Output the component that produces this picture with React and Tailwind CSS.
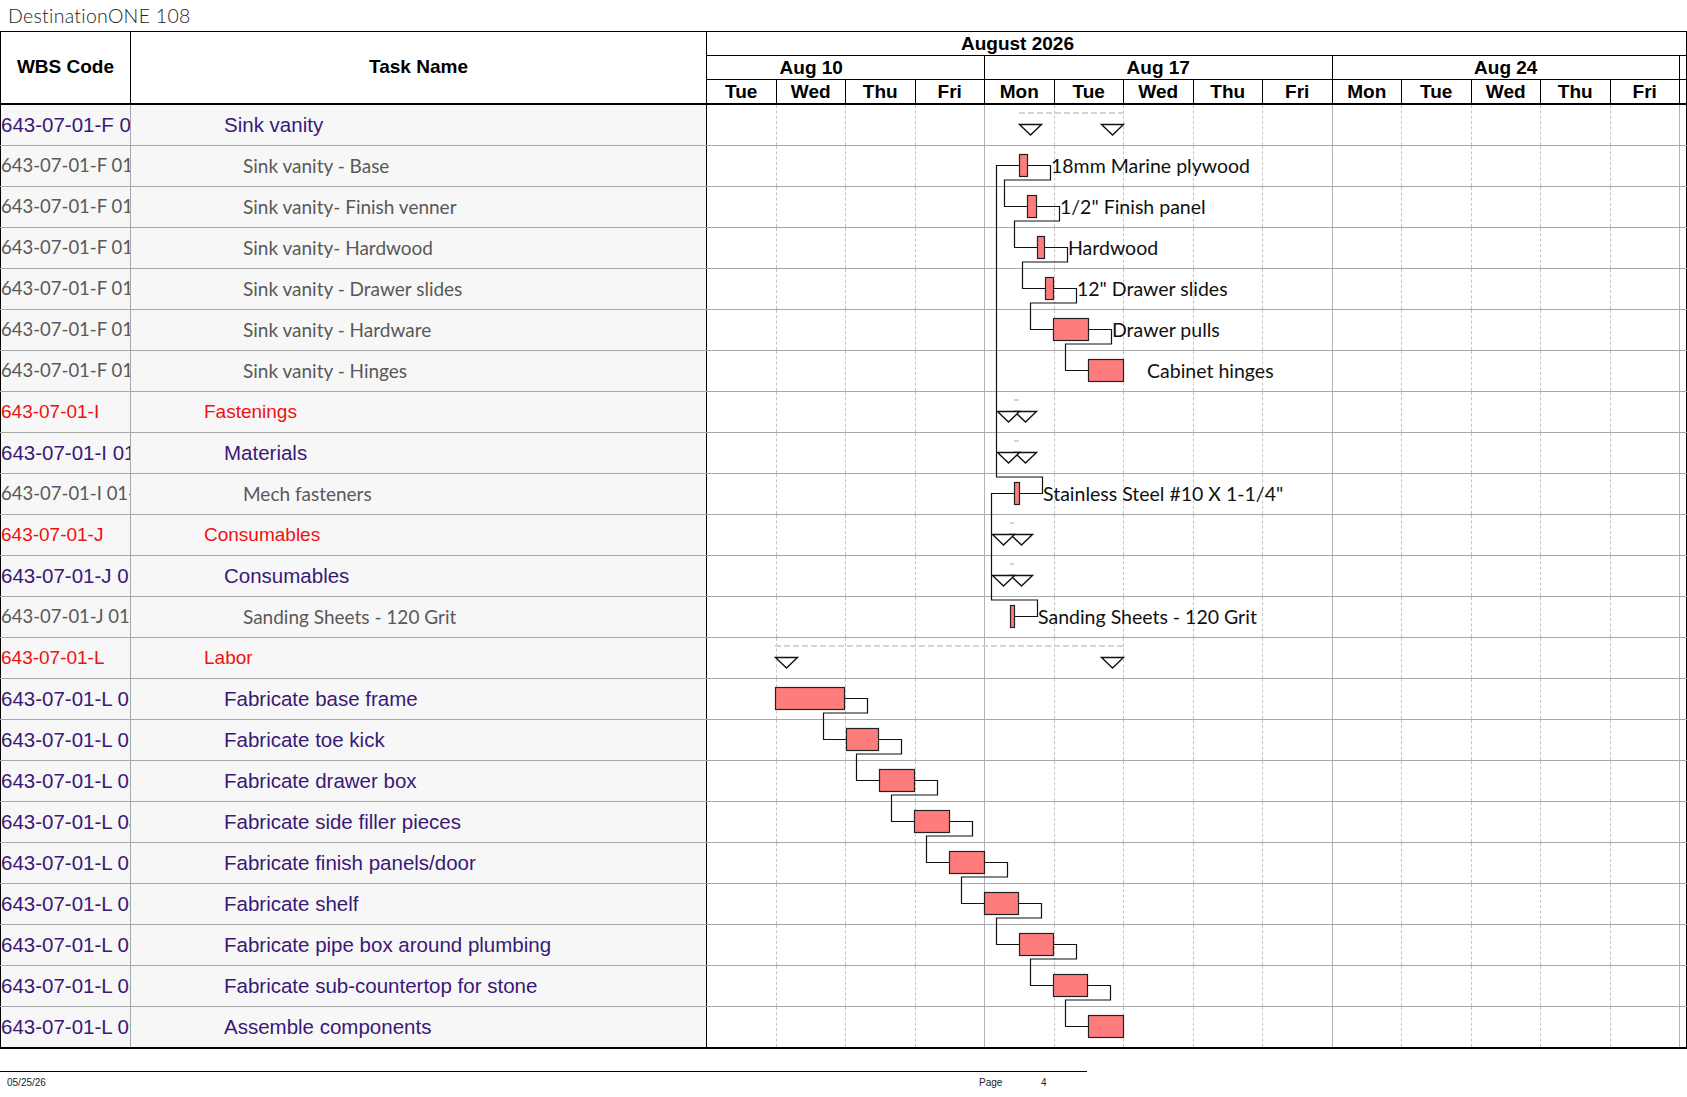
const rows = [
  { wbs: '643-07-01-F 01', name: 'Sink vanity', kind: 'p' },
  { wbs: '643-07-01-F 01-01', name: 'Sink vanity - Base', kind: 'g' },
  { wbs: '643-07-01-F 01-02', name: 'Sink vanity- Finish venner', kind: 'g' },
  { wbs: '643-07-01-F 01-03', name: 'Sink vanity- Hardwood', kind: 'g' },
  { wbs: '643-07-01-F 01-04', name: 'Sink vanity - Drawer slides', kind: 'g' },
  { wbs: '643-07-01-F 01-05', name: 'Sink vanity - Hardware', kind: 'g' },
  { wbs: '643-07-01-F 01-06', name: 'Sink vanity - Hinges', kind: 'g' },
  { wbs: '643-07-01-I', name: 'Fastenings', kind: 'r' },
  { wbs: '643-07-01-I 01', name: 'Materials', kind: 'p' },
  { wbs: '643-07-01-I 01-01', name: 'Mech fasteners', kind: 'g' },
  { wbs: '643-07-01-J', name: 'Consumables', kind: 'r' },
  { wbs: '643-07-01-J 01', name: 'Consumables', kind: 'p' },
  { wbs: '643-07-01-J 01-01', name: 'Sanding Sheets - 120 Grit', kind: 'g' },
  { wbs: '643-07-01-L', name: 'Labor', kind: 'r' },
  { wbs: '643-07-01-L 01', name: 'Fabricate base frame', kind: 'p' },
  { wbs: '643-07-01-L 02', name: 'Fabricate toe kick', kind: 'p' },
  { wbs: '643-07-01-L 03', name: 'Fabricate drawer box', kind: 'p' },
  { wbs: '643-07-01-L 04', name: 'Fabricate side filler pieces', kind: 'p' },
  { wbs: '643-07-01-L 05', name: 'Fabricate finish panels/door', kind: 'p' },
  { wbs: '643-07-01-L 06', name: 'Fabricate shelf', kind: 'p' },
  { wbs: '643-07-01-L 07', name: 'Fabricate pipe box around plumbing', kind: 'p' },
  { wbs: '643-07-01-L 08', name: 'Fabricate sub-countertop for stone', kind: 'p' },
  { wbs: '643-07-01-L 09', name: 'Assemble components', kind: 'p' },
];

const days = ['Tue', 'Wed', 'Thu', 'Fri', 'Mon', 'Tue', 'Wed', 'Thu', 'Fri', 'Mon', 'Tue', 'Wed', 'Thu', 'Fri'];
const weekEnds = [3, 8, 13];

// bar positions in page x, by row
const bars = {
  1: [1019, 1027], 2: [1027, 1036], 3: [1037, 1044], 4: [1045, 1053], 5: [1053, 1088], 6: [1088, 1123],
  9: [1014, 1019], 12: [1010, 1014],
  14: [775, 844], 15: [846, 878], 16: [879, 914], 17: [914, 949], 18: [949, 984],
  19: [984, 1018], 20: [1019, 1053], 21: [1053, 1087], 22: [1088, 1123],
};

const summaries = [
  [0, 1019, 1123], [7, 1014, 1019], [8, 1014, 1019], [10, 1010, 1014], [11, 1010, 1014], [13, 775, 1123],
];

const links = [
  [1, 2], [2, 3], [3, 4], [4, 5], [5, 6], [9, 1], [12, 9],
  [14, 15], [15, 16], [16, 17], [17, 18], [18, 19], [19, 20], [20, 21], [21, 22],
];

const labels = {
  1: '18mm Marine plywood',
  2: '1/2" Finish panel',
  3: 'Hardwood',
  4: '12" Drawer slides',
  5: 'Drawer pulls',
  6: 'Cabinet hinges',
  9: 'Stainless Steel #10 X 1-1/4"',
  12: 'Sanding Sheets - 120 Grit',
};

const RH = 41;
const top = (i) => i * RH;
const mid = (i) => i * RH + 19.5;

const textClass = {
  p: "font-['Liberation_Sans',Arial,sans-serif] text-[20.5px] text-[#3b1878]",
  r: "font-['Liberation_Sans',Arial,sans-serif] text-[19px] text-[#ee1111]",
  g: "font-['Lato',sans-serif] text-[19px] text-[#595959]",
};
const wbsClass = {
  p: textClass.p,
  r: textClass.r,
  g: "font-['Lato',sans-serif] text-[18.5px] text-[#595959]",
};
const indent = { r: 'pl-[73px]', p: 'pl-[93px]', g: 'pl-[112px]' };

function linkPath(a, b) {
  const [, ea] = bars[a];
  const [sb] = bars[b];
  const x1 = ea + 23;
  const x2 = sb - 23;
  const turnY = b > a ? top(a) + 34 : top(a) + 3;
  const pts = [
    [ea, mid(a)], [x1, mid(a)], [x1, turnY], [x2, turnY], [x2, mid(b)], [sb, mid(b)],
  ];
  return pts.map(([x, y]) => `${x + 0.5},${y}`).join(' ');
}

function Tri({ x, y }) {
  return (
    <polygon
      points={`${x + 0.5},${y} ${x + 22.5},${y} ${x + 11.5},${y + 10.5}`}
      fill="white"
      stroke="#111"
      strokeWidth="1.4"
    />
  );
}

function GanttDrawing() {
  return (
    <svg className="absolute left-0 top-0 pointer-events-none" width="1687" height="950">
      {summaries.map(([r, s, e]) => (
        <g key={'s' + r}>
          <line x1={s} x2={e} y1={top(r) + 8} y2={top(r) + 8} stroke="#d4d4d4" strokeWidth="2" strokeDasharray="6 3" />
          <Tri x={s} y={top(r) + 19.5} />
          <Tri x={e - 22} y={top(r) + 19.5} />
        </g>
      ))}
      {links.map(([a, b]) => (
        <polyline key={'l' + a + b} points={linkPath(a, b)} fill="none" stroke="#111" strokeWidth="1.2" />
      ))}
      {Object.entries(bars).map(([r, [s, e]]) => (
        <rect
          key={'b' + r}
          x={s + 0.5}
          y={top(+r) + 8.5}
          width={e - s}
          height="22"
          fill="#ff7c7c"
          stroke="#222"
          strokeWidth="1.2"
        />
      ))}
      {Object.entries(labels).map(([r, t]) => {
        const e = bars[r][1];
        return (
          <text key={'t' + r} x={e + 24} y={mid(+r) + 7.5} fontFamily="Lato, sans-serif" fontSize="19.5" fill="#111">
            {t}
          </text>
        );
      })}
    </svg>
  );
}

function BodyRow({ row, last }) {
  return (
    <div className={`flex h-[41px] ${last ? 'h-[42px] border-b-2 border-black' : 'border-b border-[#a8a8a8]'}`}>
      <div className="w-[131px] shrink-0 border-l border-l-black border-r border-r-[#a8a8a8] bg-[#f7f7f7] overflow-hidden whitespace-nowrap flex items-center">
        <span className={wbsClass[row.kind]}>{row.wbs}</span>
      </div>
      <div className={`w-[576px] shrink-0 border-r border-black bg-[#f7f7f7] flex items-center whitespace-nowrap ${indent[row.kind]}`}>
        <span className={textClass[row.kind]}>{row.name}</span>
      </div>
      {days.map((d, i) => (
        <div
          key={i}
          className={`w-[69.5px] shrink-0 border-r ${weekEnds.includes(i) ? 'border-solid border-[#b4b4b4]' : 'border-dashed border-[#c4c4c4]'}`}
        />
      ))}
      <div className="flex-1 border-r border-black" />
    </div>
  );
}

export default function App() {
  return (
    <div className="w-[1687px] h-[1097px] bg-white overflow-hidden text-black font-['Liberation_Sans',Arial,sans-serif]">
      <div className="h-[31px] pl-[8px] flex items-center text-[19.5px] font-light font-['Lato',sans-serif] text-[#222] tracking-[0.3px]">
        DestinationONE 108
      </div>

      <div className="w-[1687px] border-t border-black">
        {/* header */}
        <div className="flex h-[73px]">
          <div className="w-[131px] shrink-0 border-l border-r border-b-2 border-black flex items-center justify-center font-bold text-[19px]">
            WBS Code
          </div>
          <div className="w-[576px] shrink-0 border-r border-b-2 border-black flex items-center justify-center font-bold text-[19px]">
            Task Name
          </div>
          <div className="flex-1 flex flex-col font-bold text-[19px]">
            <div className="h-[24px] border-b border-r border-black flex items-center pl-[254px] leading-none">
              August 2026
            </div>
            <div className="h-[24px] border-b border-black flex">
              <div className="w-[278px] shrink-0 border-r border-black overflow-hidden flex items-center">
                <div className="ml-[-69.5px] w-[347.5px] shrink-0 text-center leading-none">Aug 10</div>
              </div>
              <div className="w-[347.5px] shrink-0 border-r border-black flex items-center justify-center leading-none">Aug 17</div>
              <div className="w-[347.5px] shrink-0 border-r border-black flex items-center justify-center leading-none">Aug 24</div>
              <div className="flex-1 border-r border-black" />
            </div>
            <div className="h-[25px] border-b-2 border-black flex">
              {days.map((d, i) => (
                <div key={i} className="w-[69.5px] shrink-0 border-r border-black flex items-center justify-center leading-none">
                  {d}
                </div>
              ))}
              <div className="flex-1 border-r border-black" />
            </div>
          </div>
        </div>

        {/* body */}
        <div className="relative">
          {rows.map((r, i) => (
            <BodyRow key={i} row={r} last={i === rows.length - 1} />
          ))}
          <GanttDrawing />
        </div>
      </div>

      {/* footer */}
      <div className="mt-[22px] w-[1087px] border-t border-black">
        <div className="flex items-center pt-[6px] text-[10px] text-[#222] leading-none">
          <span className="w-[979px] pl-[7px]">05/25/26</span>
          <span className="w-[62px]">Page</span>
          <span>4</span>
        </div>
      </div>
    </div>
  );
}
